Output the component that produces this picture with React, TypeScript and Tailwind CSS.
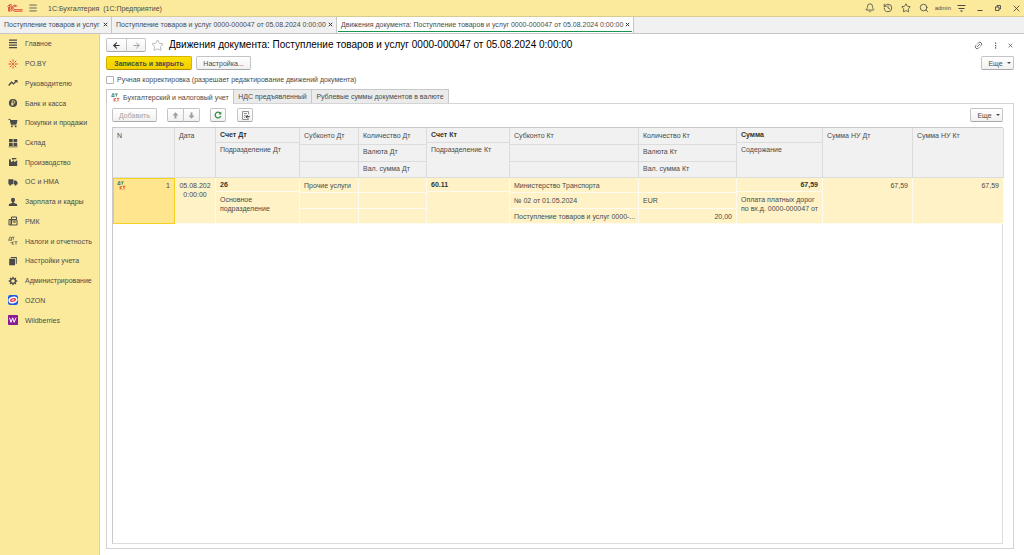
import type { ReactNode } from "react";
import {
  Bell,
  History,
  Star,
  Search,
  Link2,
  ArrowLeft,
  ArrowRight,
  Menu,
} from "lucide-react";

const openTabs = [
  { title: "Поступление товаров и услуг", active: false, width: "w-[112px]" },
  {
    title: "Поступление товаров и услуг 0000-000047 от 05.08.2024 0:00:00",
    active: false,
    width: "w-[225px]",
  },
  {
    title:
      "Движения документа: Поступление товаров и услуг 0000-000047 от 05.08.2024 0:00:00",
    active: true,
    width: "w-[297px]",
  },
];

const sections: { title: string; icon: ReactNode }[] = [
  {
    title: "Главное",
    icon: <path d="M1 1.2h8M1 3.7h8M1 6.2h8M1 8.7h8" stroke="currentColor" strokeWidth="1.2" />,
  },
  {
    title: "PO.BY",
    icon: (
      <g stroke="#d9432f" strokeWidth="1" fill="none">
        <path d="M5 .5v2.2M5 7.3v2.2M.5 5h2.5M7 5h2.5M1.8 1.8l1.8 1.8M8.2 1.8L6.4 3.6M1.8 8.2l1.8-1.8M8.2 8.2L6.4 6.4" />
        <circle cx="5" cy="5" r=".8" />
      </g>
    ),
  },
  {
    title: "Руководителю",
    icon: (
      <>
        <path d="M.7 7.5L3.5 4.3l2 1.6L8.3 3" fill="none" stroke="currentColor" strokeWidth="1.4" />
        <path d="M6.2 2h3.3v3.3z" />
      </>
    ),
  },
  {
    title: "Банк и касса",
    icon: (
      <>
        <circle cx="5" cy="5" r="4.1" />
        <path d="M4.2 8V2.8h1.4a1.2 1.2 0 010 2.6H3.2M3.2 6.6h2.4" fill="none" stroke="#fbea9c" strokeWidth=".8" />
      </>
    ),
  },
  {
    title: "Покупки и продажи",
    icon: (
      <>
        <path d="M.5 1.4h1.7L3.4 6.8h5" fill="none" stroke="currentColor" strokeWidth="1" />
        <path d="M2.3 2h7.2L8.6 6H3.2z" />
        <circle cx="3.9" cy="8.4" r=".9" />
        <circle cx="7.7" cy="8.4" r=".9" />
      </>
    ),
  },
  {
    title: "Склад",
    icon: <path d="M1 1h3.7v3.3H1zM5.5 1h3.7v3.300H5.500zM1 5h3.700v3H1zM5.500 5h3.700v3H5.500zM.6 8.500h9v.8h-9z" />,
  },
  {
    title: "Производство",
    icon: <path d="M1 9V2.200h1.600l.5 3 3-1.900v1.900L9.200 3.300V9zM3.600 1h4.800v1.200H6L4.600 3z" />,
  },
  {
    title: "ОС и НМА",
    icon: (
      <>
        <path d="M.4 2.2h5v5h-5zM5.9 3.6h2.2l1.5 1.8v1.8H5.9z" />
        <circle cx="2.3" cy="7.6" r="1.1" />
        <circle cx="7.6" cy="7.6" r="1.1" />
      </>
    ),
  },
  {
    title: "Зарплата и кадры",
    icon: <path d="M5 .8a2 2 0 012 2c0 1.2-.7 2.2-1.2 2.5v.6l2.6.9c.6.3.8.9.8 2.2H.8c0-1.3.2-1.9.8-2.2l2.6-.9v-.6C3.7 5 3 4 3 2.8a2 2 0 012-2z" />,
  },
  {
    title: "РМК",
    icon: (
      <>
        <path d="M3.5 1h5v2.5h-5zM1 3.5h2V9H1zM3.5 4H9v5H3.500z" fill="none" stroke="currentColor" strokeWidth="1" />
        <path d="M4.800 5.400h3v1.200h-3z" />
      </>
    ),
  },
  {
    title: "Налоги и отчетность",
    icon: (
      <g fill="none" stroke="currentColor" strokeWidth=".7">
        <path d="M.8 4.200l1-3h1.600v3M.4 4.200h3.600M4 1.200h2.300M5.200 1.200v2.600" />
        <path d="M4.200 5.500v3.200M6 5.500L4.400 7.100 6 8.700M6.700 5.700h2.600M8 5.700v3M2.500 6.500h1" />
      </g>
    ),
  },
  {
    title: "Настройки учета",
    icon: (
      <>
        <path d="M1.200 2.700H7V9.300H1.200z" />
        <path d="M2.400 1.900l.9-1h5.500v6.500l-1 .9V1.900z" />
      </>
    ),
  },
  {
    title: "Администрирование",
    icon: (
      <>
        <circle cx="5" cy="5" r="2.400" fill="none" stroke="currentColor" strokeWidth="1.300" />
        <path
          d="M5 .7v1.800M5 7.500v1.800M.7 5h1.800M7.500 5h1.800M2 2l1.200 1.200M6.800 6.800L8 8M8 2L6.800 3.200M3.200 6.800L2 8"
          stroke="currentColor"
          strokeWidth="1.300"
        />
      </>
    ),
  },
  {
    title: "OZON",
    icon: (
      <>
        <rect width="10" height="10" rx="2.200" fill="#1f5be3" />
        <ellipse cx="5" cy="5" rx="4.600" ry="3.300" fill="#fff" transform="rotate(-18 5 5)" />
        <ellipse cx="5" cy="5" rx="3.200" ry="1.800" fill="#ef3b50" transform="rotate(-18 5 5)" />
        <ellipse cx="5" cy="5" rx="1.500" ry=".6" fill="#fff" transform="rotate(-18 5 5)" />
      </>
    ),
  },
  {
    title: "Wildberries",
    icon: (
      <>
        <rect width="10" height="10" rx=".8" fill="#8a1a94" />
        <path d="M1.500 2.800L3 7.300l1.700-4.500 1.500 4.500 1.900-4.800" fill="none" stroke="#fff" strokeWidth="1" />
      </>
    ),
  },
];

type Line = { text?: string; bold?: boolean; right?: boolean };
type Column = { width: string; head: Line[]; cell: Line[] };

const columns: Column[] = [
  {
    width: "w-[84px]",
    head: [{ text: "Счет Дт", bold: true }, { text: "Подразделение Дт" }],
    cell: [{ text: "26", bold: true }, { text: "Основное подразделение" }],
  },
  {
    width: "w-[59px]",
    head: [{ text: "Субконто Дт" }, {}, {}],
    cell: [{ text: "Прочие услуги" }, {}, {}],
  },
  {
    width: "w-[68px]",
    head: [{ text: "Количество Дт" }, { text: "Валюта Дт" }, { text: "Вал. сумма Дт" }],
    cell: [{}, {}, {}],
  },
  {
    width: "w-[83px]",
    head: [{ text: "Счет Кт", bold: true }, { text: "Подразделение Кт" }],
    cell: [{ text: "60.11", bold: true }, {}],
  },
  {
    width: "w-[129px]",
    head: [{ text: "Субконто Кт" }, {}, {}],
    cell: [
      { text: "Министерство Транспорта" },
      { text: "№ 02 от 01.05.2024" },
      { text: "Поступление товаров и услуг 0000-..." },
    ],
  },
  {
    width: "w-[98px]",
    head: [{ text: "Количество Кт" }, { text: "Валюта Кт" }, { text: "Вал. сумма Кт" }],
    cell: [{}, { text: "EUR" }, { text: "20,00", right: true }],
  },
  {
    width: "w-[86px]",
    head: [{ text: "Сумма", bold: true }, { text: "Содержание" }],
    cell: [
      { text: "67,59", bold: true, right: true },
      { text: "Оплата платных дорог по вх.д. 0000-000047 от" },
    ],
  },
  {
    width: "w-[90px]",
    head: [{ text: "Сумма НУ Дт" }],
    cell: [{ text: "67,59", right: true }],
  },
  {
    width: "w-[91px]",
    head: [{ text: "Сумма НУ Кт" }],
    cell: [{ text: "67,59", right: true }],
  },
];

function DtKt({ className }: { className?: string }) {
  return (
    <svg viewBox="0 0 10 10" className={className} fill="none" strokeWidth="1">
      <path d="M1 3.400l.8-2.600h1.400v2.600M.5 3.900H4" stroke="#2f7f8f" />
      <path d="M4.500 1h3M6 1v3" stroke="#3c8f4c" />
      <path d="M3.500 5.500v4M5.500 5.500L3.900 7.400l1.700 2.100M6.300 6h3M7.800 6v3.500" stroke="#d9503f" />
    </svg>
  );
}

function Caret() {
  return (
    <svg viewBox="0 0 4 2" className="h-[2px] w-1" fill="currentColor">
      <path d="M0 0h4L2 2z" />
    </svg>
  );
}

const plainButton =
  "border-[#c4c4c4] border-b-[#a8a8a8] bg-linear-to-b from-white to-[#f1f1f1]";
const primaryButton =
  "border-[#d3b400] border-b-[#a98f00] bg-linear-to-b from-[#fbe000] to-[#f3d000] font-bold";

function Button({
  children,
  className = "",
  label,
  primary,
}: {
  children: ReactNode;
  className?: string;
  label?: string;
  primary?: boolean;
}) {
  return (
    <button
      type="button"
      aria-label={label}
      className={`flex h-[14px] shrink-0 items-center justify-center rounded-[2px] border ${
        primary ? primaryButton : plainButton
      } ${className}`}
    >
      {children}
    </button>
  );
}

const headRows = ["grid-rows-[50px]", "grid-rows-[15px_35px]", "grid-rows-[17px_17px_16px]"];
const bodyRows = ["grid-rows-[46px]", "grid-rows-[14px_32px]", "grid-rows-[15px_16px_15px]"];

function CellStack({ lines, head }: { lines: Line[]; head?: boolean }) {
  const rows = (head ? headRows : bodyRows)[lines.length - 1];
  const line = head ? "border-[#dcdcdc]" : "border-[#fffaf0]";

  return (
    <div className={`grid grid-cols-[minmax(0,1fr)] ${rows}`}>
      {lines.map((item, index) => (
        <div
          key={index}
          className={`border-r border-b pl-1 leading-[9px] ${line} ${
            item.bold || (head && index > 0) ? "pt-[2px]" : "pt-[3px]"
          } ${item.bold ? "font-bold text-[#333]" : "font-normal"} ${
            item.right ? "pr-1 text-right" : "text-left"
          } ${lines.length === 3 ? "whitespace-nowrap" : ""}`}
        >
          {item.text}
        </div>
      ))}
    </div>
  );
}

function TitleBar() {
  return (
    <header className="flex h-[17px] shrink-0 items-center border-b border-[#d8cc92] bg-[#fbea9c] pr-1 pl-[7px]">
      <svg viewBox="0 0 16 8" className="h-2 w-4" fill="none" stroke="#d8262c" strokeWidth=".8">
        <path d="M.4 2.600L2.600.7v6.800M4.200 7.500V.5H3.200M1.600 3v4.500" />
        <path d="M10.400 2.400A3 3 0 107.800 7.200h7.800M9.200 2.900A1.700 1.700 0 107.800 5.700h7.800" />
      </svg>
      <button type="button" aria-label="Меню" className="ml-[5px]">
        <Menu className="size-[10px]" strokeWidth={2} />
      </button>
      <span className="ml-[10px] whitespace-pre">1С:Бухгалтерия  (1С:Предприятие)</span>
      <div className="ml-auto flex items-center">
        <button type="button" aria-label="Уведомления" className="mr-2">
          <Bell className="size-[10px]" />
        </button>
        <button type="button" aria-label="История" className="mr-2">
          <History className="size-[10px]" />
        </button>
        <button type="button" aria-label="Избранное" className="mr-2">
          <Star className="size-[10px]" />
        </button>
        <button type="button" aria-label="Поиск" className="mr-[6px]">
          <Search className="size-[10px]" />
        </button>
        <span className="mr-[6px] text-[6px]">admin</span>
        <button type="button" aria-label="Сервис" className="mr-[11px]">
          <svg viewBox="0 0 9 9" className="size-[9px]" fill="currentColor">
            <path d="M.5 1h8v.9h-8zM1.500 4h6v.9h-6zM3 6.500h3L4.500 8.300z" />
          </svg>
        </button>
        <button type="button" aria-label="Свернуть" className="mr-3">
          <svg viewBox="0 0 6 8" className="h-2 w-[6px]" stroke="currentColor">
            <path d="M.5 6.500h5" />
          </svg>
        </button>
        <button type="button" aria-label="Восстановить" className="mr-3">
          <svg viewBox="0 0 6 6" className="size-[6px]" fill="none" stroke="currentColor" strokeWidth=".9">
            <path d="M.5 2H4v3.500H.5zM2 2V.5h3.500V4H4" />
          </svg>
        </button>
        <button type="button" aria-label="Закрыть">
          <svg viewBox="0 0 7 7" className="size-[7px]" stroke="currentColor" strokeWidth=".9">
            <path d="M.7.700l5.600 5.600M6.300.7L.7 6.300" />
          </svg>
        </button>
      </div>
    </header>
  );
}

function OpenTabs() {
  return (
    <nav className="flex h-[17px] shrink-0 border-b border-[#c6c6c6] bg-[#f1f1f1]">
      {openTabs.map((tab) => (
        <div
          key={tab.title}
          className={`flex shrink-0 border-r border-[#c6c6c6] px-px ${tab.width} ${
            tab.active ? "bg-white" : ""
          }`}
        >
          <div
            className={`mb-px flex flex-1 items-center justify-between border-b pr-[2px] pl-[3px] whitespace-nowrap ${
              tab.active ? "border-[#169650]" : "border-transparent"
            }`}
          >
            <a href="#">{tab.title}</a>
            <button type="button" aria-label="Закрыть вкладку">
              <svg viewBox="0 0 5 5" className="size-[5px]" stroke="#333" strokeWidth="1">
                <path d="M.8.800l3.400 3.400M4.200.8L.8 4.200" />
              </svg>
            </button>
          </div>
        </div>
      ))}
    </nav>
  );
}

function Sidebar() {
  return (
    <aside className="w-[100px] shrink-0 border-r border-[#d9d0a4] bg-[#fbea9c]">
      <ul className="grid h-[296px] auto-rows-fr">
        {sections.map((section) => (
          <li key={section.title} className="flex">
            <a href="#" className="flex flex-1 items-center gap-[7px] pl-2 whitespace-nowrap">
              <svg viewBox="0 0 10 10" className="size-[10px] shrink-0" fill="currentColor">
                {section.icon}
              </svg>
              {section.title}
            </a>
          </li>
        ))}
      </ul>
    </aside>
  );
}

function MovementsTable() {
  return (
    <div className="mr-[10px] mb-1 ml-[5px] flex-1 border border-[#c8c8c8] border-r-[#dcdcdc] border-b-[#dcdcdc]">
      <table className="w-full table-fixed border-collapse">
        <thead>
          <tr className="bg-[#f1f1f1] align-top">
            <th className="w-[62px] p-0">
              <CellStack head lines={[{ text: "N" }]} />
            </th>
            <th className="w-[41px] p-0">
              <CellStack head lines={[{ text: "Дата" }]} />
            </th>
            {columns.map((column, index) => (
              <th key={index} className={`p-0 ${column.width}`}>
                <CellStack head lines={column.head} />
              </th>
            ))}
          </tr>
        </thead>
        <tbody>
          <tr className="bg-[#fff2c7] align-top">
            <td className="p-0">
              <div className="flex h-[46px] items-start justify-between border border-[#f5d21f] bg-[#ffe58e] pt-[2px] pr-1 pl-[3px] leading-[9px]">
                <DtKt className="size-[9px]" />
                <span>1</span>
              </div>
            </td>
            <td className="p-0">
              <div className="h-[46px] border-r border-b border-[#fffaf0] px-1 pt-[3px] text-center leading-[9px] whitespace-nowrap">
                05.08.202
                <br />
                0:00:00
              </div>
            </td>
            {columns.map((column, index) => (
              <td key={index} className="p-0">
                <CellStack lines={column.cell} />
              </td>
            ))}
          </tr>
        </tbody>
      </table>
    </div>
  );
}

function MovementsPanel() {
  return (
    <section className="flex flex-1 flex-col">
      <div className="flex" role="tablist">
        <button
          type="button"
          role="tab"
          aria-selected="true"
          className="z-10 -mb-px flex h-[15px] w-[128px] items-center gap-[3px] border border-b-0 border-[#c8c8c8] bg-white pl-1 whitespace-nowrap"
        >
          <DtKt className="size-[9px]" />
          Бухгалтерский и налоговый учет
        </button>
        <button
          type="button"
          role="tab"
          className="flex h-[14px] w-[78px] items-center justify-center border-t border-r border-[#c8c8c8] bg-[#ebebeb] whitespace-nowrap"
        >
          НДС предъявленный
        </button>
        <button
          type="button"
          role="tab"
          className="flex h-[14px] w-[137px] items-center justify-center border-t border-r border-[#c8c8c8] bg-[#ebebeb] whitespace-nowrap"
        >
          Рублевые суммы документов в валюте
        </button>
      </div>
      <div className="flex flex-1 flex-col border border-[#d4d4d4]">
        <div className="flex items-center pt-1 pr-[10px] pb-[5px] pl-[5px]">
          <Button className="w-[45px] text-[#a3a3a3]">Добавить</Button>
          <div className="ml-[10px] flex text-[#a0a0a0]">
            <Button label="Вверх" className="w-[17px] rounded-r-none">
              <svg viewBox="0 0 7 7" className="size-[7px]" fill="currentColor">
                <path d="M3.500.3L6.500 3.400h-2v3.200h-2V3.400h-2z" />
              </svg>
            </Button>
            <Button label="Вниз" className="w-4 rounded-l-none border-l-0">
              <svg viewBox="0 0 7 7" className="size-[7px]" fill="currentColor">
                <path d="M3.500 6.700L.5 3.600h2V.4h2v3.200h2z" />
              </svg>
            </Button>
          </div>
          <Button label="Обновить" className="ml-[10px] w-4">
            <svg viewBox="0 0 8 8" className="size-2" fill="none" stroke="#2c8c3c" strokeWidth="1.200">
              <path d="M6.400 2.300A2.900 2.900 0 106.800 5" />
              <path d="M7.300.6v2.800H4.500z" fill="#2c8c3c" stroke="none" />
            </svg>
          </Button>
          <Button label="Перейти" className="ml-[11px] w-4">
            <svg viewBox="0 0 9 9" className="size-[9px]" fill="none" stroke="#777" strokeWidth=".8">
              <path d="M7.500 3.500v-3h-6v8h6V7.500M3 2.500h3M3 4.500h1.500M3 6.500h1" />
              <path d="M8.800 5.700H5M6.600 4L5 5.700l1.600 1.700" stroke="#333" strokeWidth="1" />
            </svg>
          </Button>
          <Button className="ml-auto w-[33px] gap-1 pl-1">
            Еще
            <Caret />
          </Button>
        </div>
        <MovementsTable />
      </div>
    </section>
  );
}

export default function App() {
  return (
    <div className="flex min-h-screen flex-col bg-white font-['Liberation_Sans',Arial,sans-serif] text-[7px] leading-[9px] text-[#4a4a4a]">
      <TitleBar />
      <OpenTabs />
      <div className="flex flex-1">
        <Sidebar />
        <main className="flex min-w-0 flex-1 flex-col pt-1 pr-[10px] pb-[6px] pl-[6px]">
          <div className="flex items-center">
            <Button label="Назад" className="w-[21px] rounded-r-none text-[#333]">
              <ArrowLeft className="size-[9px]" strokeWidth={3} />
            </Button>
            <Button label="Вперед" className="w-[19px] rounded-l-none border-l-0 text-[#999]">
              <ArrowRight className="size-[9px]" strokeWidth={2.5} />
            </Button>
            <button type="button" aria-label="В избранное" className="ml-[5px] text-[#aaa]">
              <Star className="size-[13px]" strokeWidth={1.5} />
            </button>
            <h1 className="ml-[5px] text-[10px] leading-[14px] whitespace-nowrap text-black">
              Движения документа: Поступление товаров и услуг 0000-000047 от 05.08.2024 0:00:00
            </h1>
            <div className="ml-auto flex items-center gap-[11px]">
              <button type="button" aria-label="Ссылка">
                <Link2 className="size-[9px] -rotate-45" />
              </button>
              <button type="button" aria-label="Действия">
                <svg viewBox="0 0 3 7" className="h-[7px] w-[3px]" fill="currentColor">
                  <path d="M1 .5h1.200v1.300H1zM1 2.900h1.200v1.300H1zM1 5.300h1.200v1.300H1z" />
                </svg>
              </button>
              <button type="button" aria-label="Закрыть" className="mr-px">
                <svg viewBox="0 0 5 5" className="size-[5px]" stroke="currentColor" strokeWidth=".7">
                  <path d="M.6.600l3.800 3.800M4.400.6L.6 4.400" />
                </svg>
              </button>
            </div>
          </div>
          <div className="mt-1 flex gap-1">
            <Button primary className="w-[86px]">
              Записать и закрыть
            </Button>
            <Button className="w-[55px]">Настройка...</Button>
            <Button className="ml-auto w-[33px] gap-1 pl-1">
              Еще
              <Caret />
            </Button>
          </div>
          <label className="mt-[5px] mb-[5px] flex items-center gap-[3px]">
            <input
              type="checkbox"
              className="size-2 appearance-none rounded-[1px] border border-[#b0b0b0] bg-white"
            />
            Ручная корректировка (разрешает редактирование движений документа)
          </label>
          <MovementsPanel />
        </main>
      </div>
    </div>
  );
}
